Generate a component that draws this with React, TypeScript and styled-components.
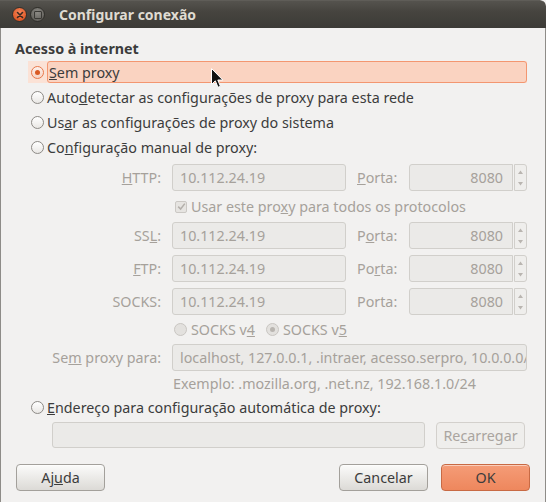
import styled, { createGlobalStyle, css } from "styled-components";

const GlobalStyle = createGlobalStyle`
  html, body {
    margin: 0;
    padding: 0;
    background: #f2f1f0;
  }
  body {
    font-family: "Noto Sans", "DejaVu Sans", sans-serif;
    font-size: 14.3px;
    color: #3c3c3c;
  }
`;

const TEXT = "#3c3c3c";
const MUTED = "#a6a19b";

type Proxy = { label: string; key: number; host: string; portKey?: number };

const proxies: Proxy[] = [
  { label: "HTTP:", key: 0, host: "10.112.24.19", portKey: 0 },
  { label: "SSL:", key: 2, host: "10.112.24.19", portKey: 1 },
  { label: "FTP:", key: 0, host: "10.112.24.19", portKey: 2 },
  { label: "SOCKS:", key: -1, host: "10.112.24.19", portKey: -1 },
];

// underline the access-key letter of a label
const Mnemonic = ({ text, at }: { text: string; at: number }) =>
  at < 0 ? (
    <>{text}</>
  ) : (
    <>
      {text.slice(0, at)}
      <u>{text[at]}</u>
      {text.slice(at + 1)}
    </>
  );

const App = () => {
  return (
    <>
      <GlobalStyle />
      <Window>
        <TitleBar>
          <WindowButtons>
            <CloseButton>
              <svg width="8" height="8" viewBox="0 0 8 8">
                <path d="M1.5 1.5 L6.5 6.5 M6.5 1.5 L1.5 6.5" stroke="#3a2a22" strokeWidth="1.6" strokeLinecap="round" />
              </svg>
            </CloseButton>
            <MinButton>
              <span />
            </MinButton>
          </WindowButtons>
          <Title>Configurar conexão</Title>
        </TitleBar>

        <Body>
          <SectionTitle>Acesso à internet</SectionTitle>

          <Options>
            <OptionRow $selected>
              <Radio $checked $accent />
              <OptionLabel $selected>
                <Mnemonic text="Sem proxy" at={0} />
              </OptionLabel>
            </OptionRow>
            <OptionRow>
              <Radio />
              <OptionLabel>
                <Mnemonic text="Autodetectar as configurações de proxy para esta rede" at={4} />
              </OptionLabel>
            </OptionRow>
            <OptionRow>
              <Radio />
              <OptionLabel>
                <Mnemonic text="Usar as configurações de proxy do sistema" at={2} />
              </OptionLabel>
            </OptionRow>
            <OptionRow>
              <Radio />
              <OptionLabel>
                <Mnemonic text="Configuração manual de proxy:" at={2} />
              </OptionLabel>
            </OptionRow>
          </Options>

          <ProxyGrid>
            {proxies.map((p, i) => (
              <>
                <FieldLabel key={`l${i}`}>
                  <Mnemonic text={p.label} at={p.key} />
                </FieldLabel>
                <TextField key={`f${i}`}>{p.host}</TextField>
                <FieldLabel key={`p${i}`} $left>
                  <Mnemonic text="Porta:" at={p.portKey ?? -1} />
                </FieldLabel>
                <SpinBox key={`s${i}`}>
                  <SpinValue>8080</SpinValue>
                  <SpinArrows>
                    <svg width="7" height="20" viewBox="0 0 7 20">
                      <path d="M1 6 L3.5 2.5 L6 6 Z" fill="#b9b5b0" />
                      <path d="M1 14 L3.5 17.5 L6 14 Z" fill="#b9b5b0" />
                    </svg>
                  </SpinArrows>
                </SpinBox>
                {i === 0 && (
                  <CheckRow key="all">
                    <CheckBox>
                      <svg width="9" height="9" viewBox="0 0 9 9">
                        <path d="M1.2 4.6 L3.6 7 L7.8 1.6" stroke="#b3afaa" strokeWidth="1.5" fill="none" />
                      </svg>
                    </CheckBox>
                    <span>
                      Usar este pro<u>x</u>y para todos os protocolos
                    </span>
                  </CheckRow>
                )}
              </>
            ))}

            <SocksRow>
              <SmallOption>
                <Radio $disabled />
                <span>
                  SOCKS v<u>4</u>
                </span>
              </SmallOption>
              <SmallOption>
                <Radio $disabled $checked />
                <span>
                  SOCKS v<u>5</u>
                </span>
              </SmallOption>
            </SocksRow>

            <FieldLabel>
              <Mnemonic text="Sem proxy para:" at={2} />
            </FieldLabel>
            <WideField>localhost, 127.0.0.1, .intraer, acesso.serpro, 10.0.0.0/8</WideField>
            <Hint>Exemplo: .mozilla.org, .net.nz, 192.168.1.0/24</Hint>
          </ProxyGrid>

          <Options $top={6}>
            <OptionRow>
              <Radio />
              <OptionLabel>
                <Mnemonic text="Endereço para configuração automática de proxy:" at={0} />
              </OptionLabel>
            </OptionRow>
          </Options>

          <AutoRow>
            <TextField $grow />
            <Button $disabled>
              <Mnemonic text="Recarregar" at={2} />
            </Button>
          </AutoRow>

          <Footer>
            <Button>
              <Mnemonic text="Ajuda" at={2} />
            </Button>
            <Spacer />
            <Button>Cancelar</Button>
            <Button $primary>OK</Button>
          </Footer>
        </Body>

        <Pointer width="13" height="21" viewBox="0 0 13 21">
          <path
            d="M0.5 0.5 L0.5 16.5 L4.3 12.8 L7 19.3 L9.4 18.3 L6.8 12 L11.8 12 Z"
            fill="#111"
            stroke="#fff"
            strokeWidth="1"
            strokeLinejoin="round"
          />
        </Pointer>
      </Window>
    </>
  );
};

export default App;

const Window = styled.div`
  position: relative;
  width: 546px;
  height: 502px;
  box-sizing: border-box;
  display: flex;
  flex-direction: column;
  background: #f2f1f0;
  overflow: hidden;
  border-top-right-radius: 6px;
`;

const TitleBar = styled.div`
  height: 28px;
  flex: none;
  display: flex;
  align-items: center;
  background: linear-gradient(#55534e, #46443f 40%, #3c3b37);
  border-top: 1px solid #5f5d58;
  box-sizing: border-box;
  border-top-right-radius: 6px;
`;

const WindowButtons = styled.div`
  display: flex;
  align-items: center;
  gap: 3px;
  padding-left: 12px;
  flex: none;
`;

const circle = css`
  flex: none;
  width: 15px;
  height: 15px;
  border-radius: 50%;
  box-sizing: border-box;
  display: flex;
  align-items: center;
  justify-content: center;
`;

const CloseButton = styled.div`
  ${circle}
  background: radial-gradient(circle at 50% 35%, #f7875b, #e05a28 70%, #b8451c);
  border: 1px solid #33302b;
`;

const MinButton = styled.div`
  ${circle}
  background: radial-gradient(circle at 50% 35%, #8c8a85, #66645f 70%, #56544f);
  border: 1px solid #2f2e2a;

  span {
    width: 6px;
    height: 6px;
    border: 1px solid #3a3935;
    border-radius: 1px;
  }
`;

const Title = styled.div`
  margin-left: 14px;
  color: #dfdbd2;
  font-weight: 700;
  font-size: 14px;
  letter-spacing: 0;
`;

const Body = styled.div`
  flex: 1;
  display: flex;
  flex-direction: column;
  padding: 12px 18px 11px 14px;
  border: 1px solid #8e8c88;
  border-top: none;
`;

const SectionTitle = styled.div`
  font-weight: 700;
  line-height: 18px;
  color: ${TEXT};
`;

const Options = styled.div<{ $top?: number }>`
  display: flex;
  flex-direction: column;
  gap: 3px;
  margin-top: ${(p) => p.$top ?? 3}px;
  padding-left: 13px;
`;

const OptionRow = styled.div<{ $selected?: boolean }>`
  height: 22px;
  display: flex;
  align-items: center;
  gap: 3px;
  padding-left: 3px;
  background: ${(p) => (p.$selected ? "#fbe2d6" : "transparent")};
`;

const OptionLabel = styled.div<{ $selected?: boolean }>`
  height: 100%;
  display: flex;
  align-items: center;
  white-space: nowrap;
  color: ${TEXT};
  ${(p) =>
    p.$selected &&
    css`
      flex: 1;
      box-sizing: border-box;
      padding-left: 1px;
      background: #fad3c1;
      border: 1px solid #f39670;
      border-radius: 3px;
    `}
`;

const Radio = styled.span<{ $checked?: boolean; $accent?: boolean; $disabled?: boolean }>`
  position: relative;
  flex: none;
  width: 13px;
  height: 13px;
  border-radius: 50%;
  box-sizing: border-box;
  border: 1px solid ${(p) => (p.$accent ? "#e7794c" : p.$disabled ? "#c9c6c2" : "#8d8a86")};
  background: ${(p) =>
    p.$disabled ? "#e3e1de" : p.$accent ? "linear-gradient(#fdf1ec, #f6d3c4)" : "linear-gradient(#ffffff, #e9e7e4)"};

  &::after {
    content: "";
    display: ${(p) => (p.$checked ? "block" : "none")};
    position: absolute;
    left: 50%;
    top: 50%;
    width: 5px;
    height: 5px;
    margin: -2.5px 0 0 -2.5px;
    border-radius: 50%;
    background: ${(p) => (p.$disabled ? "#b9b5b0" : "#d95a24")};
  }
`;

const ProxyGrid = styled.div`
  display: grid;
  grid-template-columns: 146px 174px 41px 118px;
  column-gap: 11px;
  row-gap: 6px;
  margin-top: 6px;
  align-items: center;
`;

const FieldLabel = styled.div<{ $left?: boolean }>`
  text-align: ${(p) => (p.$left ? "left" : "right")};
  color: ${MUTED};
  white-space: nowrap;
`;

const field = css`
  height: 27px;
  box-sizing: border-box;
  display: flex;
  align-items: center;
  padding: 0 7px;
  background: #ebeae8;
  border: 1px solid #d1cfcb;
  border-radius: 3px;
  color: ${MUTED};
  white-space: nowrap;
  overflow: hidden;
`;

const TextField = styled.div<{ $grow?: boolean }>`
  ${field}
  ${(p) => p.$grow && "flex: 1; height: 26px;"}
`;

const WideField = styled.div`
  ${field}
  grid-column: 2 / -1;
`;

const SpinBox = styled.div`
  display: flex;
  height: 27px;
  gap: 1px;
`;

const SpinValue = styled.div`
  ${field}
  flex: 1;
  justify-content: flex-end;
  padding-right: 9px;
  border-radius: 3px 0 0 3px;
`;

const SpinArrows = styled.div`
  width: 13px;
  box-sizing: border-box;
  display: flex;
  align-items: center;
  justify-content: center;
  background: #efeeec;
  border: 1px solid #d1cfcb;
  border-radius: 0 3px 3px 0;
`;

const CheckRow = styled.div`
  grid-column: 2 / -1;
  height: 19px;
  display: flex;
  align-items: center;
  gap: 4px;
  padding-left: 3px;
  color: ${MUTED};
`;

const CheckBox = styled.span`
  width: 12px;
  height: 12px;
  box-sizing: border-box;
  display: flex;
  align-items: center;
  justify-content: center;
  border: 1px solid #cbc8c4;
  border-radius: 2px;
  background: #e6e4e1;
`;

const SocksRow = styled.div`
  grid-column: 2 / -1;
  height: 17px;
  display: flex;
  align-items: center;
  gap: 11px;
  padding-left: 2px;
`;

const SmallOption = styled.div`
  display: flex;
  align-items: center;
  gap: 4px;
  color: ${MUTED};
`;

const Hint = styled.div`
  grid-column: 2 / -1;
  height: 13px;
  line-height: 13px;
  padding-left: 1px;
  color: ${MUTED};
`;

const AutoRow = styled.div`
  display: flex;
  gap: 11px;
  margin: 4px 2px 0 37px;
`;

const Button = styled.button<{ $primary?: boolean; $disabled?: boolean }>`
  width: 89px;
  height: 27px;
  padding: 0;
  font: inherit;
  border-radius: 4px;
  cursor: default;
  color: ${(p) => (p.$disabled ? "#aaa5a0" : TEXT)};
  border: 1px solid ${(p) => (p.$primary ? "#c86a44" : p.$disabled ? "#d3d0cc" : "#a3a09b")};
  background: ${(p) =>
    p.$primary
      ? "linear-gradient(#f59c77, #ee875d)"
      : p.$disabled
        ? "#efeeec"
        : "linear-gradient(#fbfbfa, #dcdad6)"};
  box-shadow: ${(p) => (p.$disabled ? "none" : "inset 0 1px 0 rgba(255,255,255,0.5)")};
`;

const Footer = styled.div`
  display: flex;
  gap: 13px;
  margin: 15px -3px 0 1px;
  align-items: center;
`;

const Spacer = styled.div`
  flex: 1;
`;

const Pointer = styled.svg`
  position: absolute;
  left: 211px;
  top: 68px;
`;
